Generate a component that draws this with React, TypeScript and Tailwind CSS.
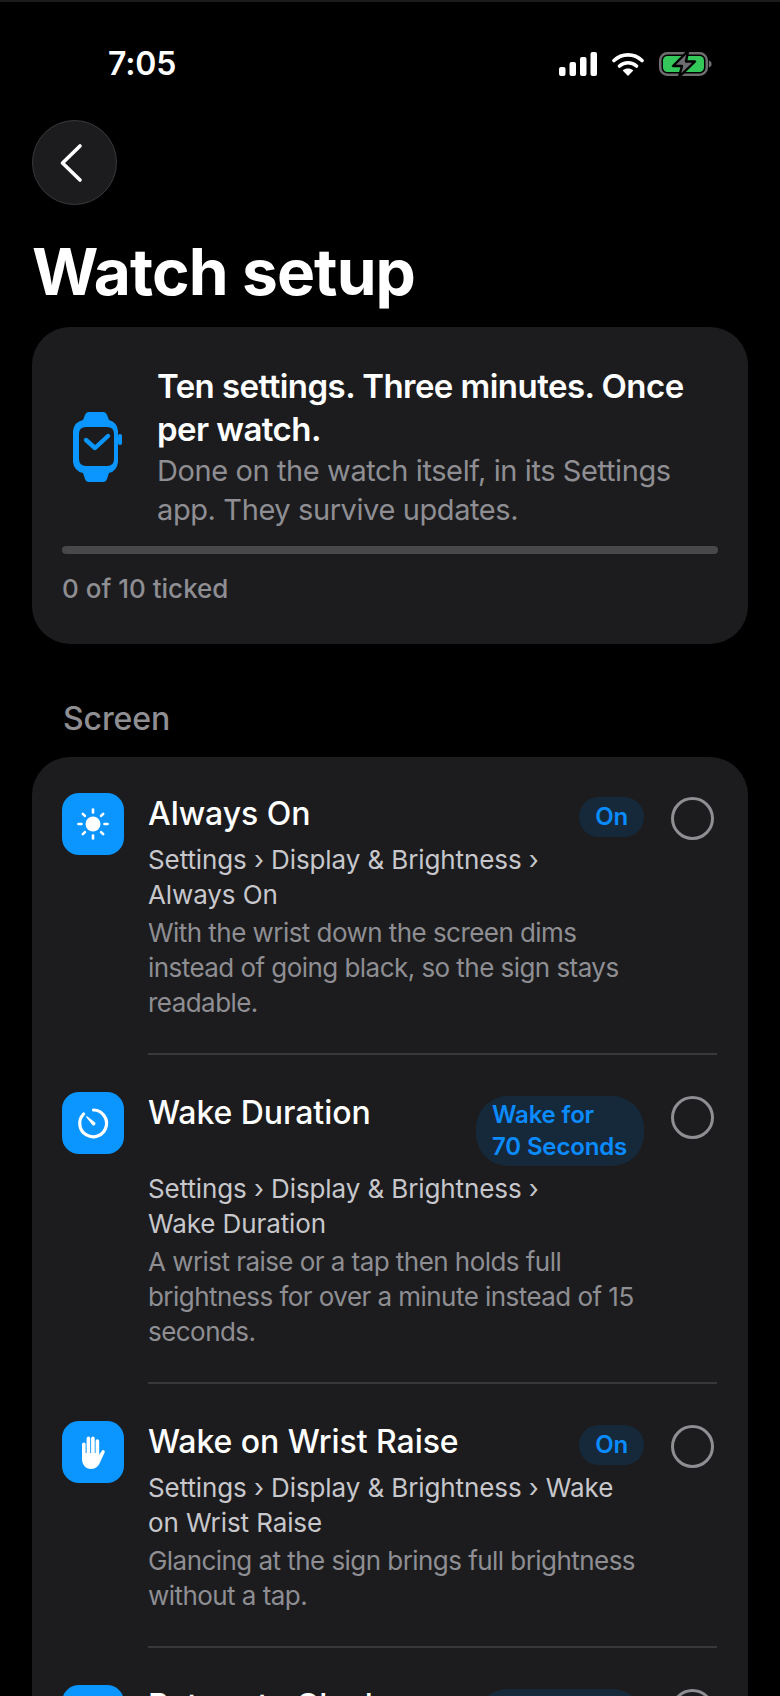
import React from "react"

interface SetupItem {
    title: string,
    path: string,
    desc: string,
    pill: string[],
    icon: React.ReactNode,
}

const SunIcon = () => (
    <svg width="36" height="36" viewBox="0 0 36 36" fill="none">
        <circle cx="18" cy="18" r="7.5" fill="white" />
        <g stroke="white" strokeWidth="2.6" strokeLinecap="round">
            <path d="M18 3.5V6.5" />
            <path d="M18 29.5V32.5" />
            <path d="M3.5 18H6.5" />
            <path d="M29.5 18H32.5" />
            <path d="M7.8 7.8L9.9 9.9" />
            <path d="M26.1 26.1L28.2 28.2" />
            <path d="M7.8 28.2L9.9 26.1" />
            <path d="M26.1 9.9L28.2 7.8" />
        </g>
    </svg>
)

const TimerIcon = () => (
    <svg width="36" height="36" viewBox="0 0 36 36" fill="none">
        <path d="M18.5 5A13.4 13.4 0 1 1 8.6 9" stroke="white" strokeWidth="3.2" strokeLinecap="round" />
        <path d="M18 19.8L11.8 11.8L19.8 18A1.4 1.4 0 0 1 18 19.8Z" fill="white" stroke="white" strokeWidth="1.2" strokeLinejoin="round" />
    </svg>
)

const HandIcon = () => (
    <svg width="24" height="33" viewBox="0 0 24 33" fill="white">
        <rect x="1" y="6.5" width="3.6" height="14" rx="1.8" />
        <rect x="5.6" y="0.6" width="3.6" height="20" rx="1.8" />
        <rect x="10.1" y="0.6" width="3.6" height="20" rx="1.8" />
        <rect x="14.6" y="3.2" width="3.6" height="18" rx="1.8" />
        <path d="M1 17V23C1 29 5 33 10 33C15 33 17.5 30 19 26.5L23.6 16.5C24.4 14.5 22 13 20.8 14.8L18.2 19V17Z" />
    </svg>
)

const WatchIcon = () => (
    <svg width="49" height="72" viewBox="0 0 49 72" fill="none">
        <path
            fillRule="evenodd"
            clipRule="evenodd"
            d="M16 1H30Q33 1 34 4L36 9Q44 11 45 20V51Q44 60 36 62L34 68Q33 71 30 71H16Q13 71 12 68L10 62Q1 60 0 51V20Q1 11 10 9L12 4Q13 1 16 1ZM13 16Q6 16 6 23V48Q6 55 13 55H34Q41 55 41 48V23Q41 16 34 16Z"
            fill="#0a95ff"
        />
        <rect x="45" y="23" width="4" height="11" rx="2" fill="#0a95ff" />
        <path d="M13 29L22 37L35 25" stroke="#0a95ff" strokeWidth="4.4" strokeLinecap="round" strokeLinejoin="round" />
    </svg>
)

const items: SetupItem[] = [
    {
        title: "Always On",
        path: "Settings › Display & Brightness › Always\u00a0On",
        desc: "With the wrist down the screen dims instead of going black, so the sign stays readable.",
        pill: ["On"],
        icon: <SunIcon />,
    },
    {
        title: "Wake Duration",
        path: "Settings › Display & Brightness › Wake\u00a0Duration",
        desc: "A wrist raise or a tap then holds full brightness for over a minute instead of 15 seconds.",
        pill: ["Wake for", "70 Seconds"],
        icon: <TimerIcon />,
    },
    {
        title: "Wake on Wrist Raise",
        path: "Settings › Display & Brightness › Wake on Wrist Raise",
        desc: "Glancing at the sign brings full brightness without a tap.",
        pill: ["On"],
        icon: <HandIcon />,
    },
    {
        title: "Return to Clock",
        path: "Settings › General › Return to Clock",
        desc: "The sign stays up for as long as you need it.",
        pill: ["After", "1 Hour"],
        icon: <SunIcon />,
    },
]

const StatusBar = () => (
    <div className="flex items-center justify-between h-[32px] pl-[108px] pr-[68px]">
        <span className="text-[32px] leading-[32px] font-semibold text-white tracking-[-0.1px]">7:05</span>
        <div className="flex items-center">
            <svg width="38" height="24" viewBox="0 0 38 24" fill="white">
                <rect x="0" y="15" width="6.5" height="9" rx="2" />
                <rect x="10.5" y="10" width="6.5" height="14" rx="2" />
                <rect x="21" y="5" width="6.5" height="19" rx="2" />
                <rect x="31.5" y="0" width="6.5" height="24" rx="2" />
            </svg>
            <svg className="ml-[15px]" width="32" height="24" viewBox="0 0 32 24" fill="none">
                <path d="M2 8.5C9.8 1 22.2 1 30 8.5" stroke="white" strokeWidth="3.6" strokeLinecap="round" />
                <path d="M7.5 14C12.4 9.6 19.6 9.6 24.5 14" stroke="white" strokeWidth="3.6" strokeLinecap="round" />
                <path d="M16 24L10.7 18.5C13.8 15.9 18.2 15.9 21.3 18.5Z" fill="white" />
            </svg>
            <svg className="ml-[15px]" width="53" height="26" viewBox="0 0 53 26" fill="none">
                <rect x="1.25" y="2.25" width="46.5" height="21.5" rx="7" stroke="#6d6d70" strokeWidth="2.5" />
                <rect x="4" y="5" width="41" height="16" rx="4.5" fill="#34c759" />
                <path d="M49.8 9.5C51.6 10 52.6 11.4 52.6 13C52.6 14.6 51.6 16 49.8 16.5Z" fill="#6d6d70" />
                <path d="M29 0L14 15H23L20 26L36 10.5H27Z" fill="#6d6d70" stroke="#000" strokeWidth="2.4" strokeLinejoin="round" />
            </svg>
        </div>
    </div>
)

const SetupRow = ({ item, last }: { item: SetupItem, last: boolean }) => (
    <div className="flex gap-[24px]">
        <div className="flex items-center justify-center w-[62px] h-[62px] shrink-0 rounded-[17px] bg-[#0a95ff]">
            {item.icon}
        </div>
        <div className={"flex-1 min-w-0 pb-[33px] " + (last ? "" : "border-b-2 border-[#38383a]")}>
            <div className="flex items-start justify-between">
                <div className="pt-[1px] text-[32px] leading-[40px] font-medium text-white tracking-[-0.05px]">{item.title}</div>
                <div className="flex items-start">
                    <div className={"flex flex-col justify-center min-h-[40px] mt-[4px] px-[16px] py-[3px] rounded-[32px] bg-[#16293a] text-[24px] leading-[32px] font-semibold text-[#0a8bff] tracking-[-0.15px] " + (item.pill.length > 1 ? "min-w-[168px]" : "")}>
                        {item.pill.map((line) => (
                            <div key={line}>{line}</div>
                        ))}
                    </div>
                    <div className="mt-[4px] -mb-[3px] ml-[27px] mr-[3px] w-[43px] h-[43px] rounded-full border-[3px] border-[#8e8e93]" />
                </div>
            </div>
            <div className="mt-[5px] pr-[90px] text-[26px] leading-[35px] text-[#c7c7cc] tracking-[-0.1px]">{item.path}</div>
            <div className="mt-[3px] pr-[60px] text-[26px] leading-[35px] text-[#8e8e93] tracking-[-0.55px]">{item.desc}</div>
        </div>
    </div>
)

export default function App() {
    return (
        <div className="h-[1696px] overflow-hidden bg-black font-['Inter',sans-serif] border-t-2 border-[#1c1c1e]">
            <div className="pt-[46px]">
                <StatusBar />
            </div>
            <div className="px-[32px]">
                <button className="flex items-center justify-center mt-[40px] w-[85px] h-[85px] rounded-full bg-[#1c1c1e] border border-[#3a3a3c]">
                    <svg className="mr-[6px]" width="26" height="40" viewBox="0 0 26 40" fill="none">
                        <path d="M21 3L3.5 20L21 37" stroke="white" strokeWidth="3.6" strokeLinecap="round" strokeLinejoin="round" />
                    </svg>
                </button>
                <h1 className="mt-[31px] text-[64px] leading-[72px] font-bold text-white tracking-[-0.9px]">Watch setup</h1>

                <div className="mt-[19px] px-[30px] pt-[38px] pb-[38px] rounded-[38px] bg-[#1c1c1e]">
                    <div className="flex items-center gap-[35px]">
                        <div className="shrink-0 ml-[11px]">
                            <WatchIcon />
                        </div>
                        <div className="flex-1 min-w-0">
                            <div className="text-[33px] leading-[43px] font-semibold text-white tracking-[-0.55px]">Ten settings. Three minutes. Once per watch.</div>
                            <div className="text-[29px] leading-[39px] text-[#8e8e93] tracking-[-0.4px]">Done on the watch itself, in its Settings app. They survive updates.</div>
                        </div>
                    </div>
                    <div className="mt-[17px] h-[8px] rounded-full bg-[#48484a]" />
                    <div className="mt-[17px] text-[26px] leading-[35px] font-medium text-[#8e8e93] tracking-[0px]">0 of 10 ticked</div>
                </div>

                <div className="mt-[57px] pl-[31px] text-[32px] leading-[36px] font-medium text-[#8e8e93] tracking-[-0.1px]">Screen</div>

                <div className="mt-[20px] pl-[30px] pr-[31px] pt-[36px] pb-[36px] rounded-[38px] bg-[#1c1c1e] flex flex-col gap-[37px]">
                    {items.map((item, i) => (
                        <SetupRow key={item.title} item={item} last={i === items.length - 1} />
                    ))}
                </div>
            </div>
        </div>
    )
}
